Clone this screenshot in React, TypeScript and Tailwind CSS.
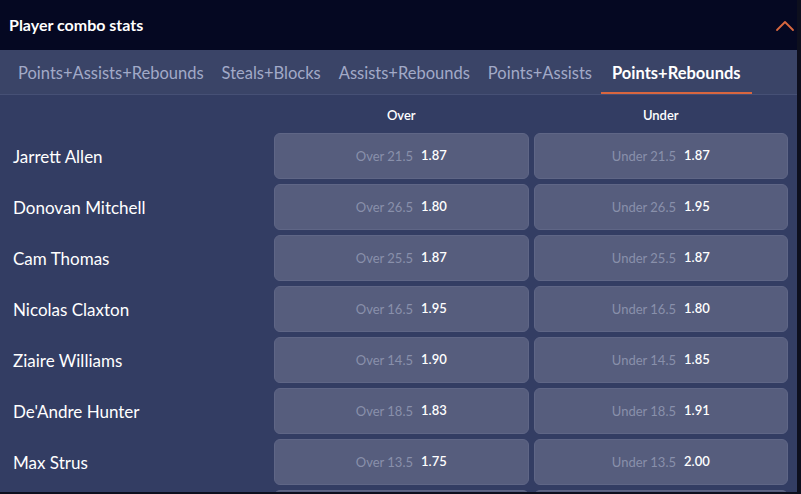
const tabs = [
  "Points+Assists+Rebounds",
  "Steals+Blocks",
  "Assists+Rebounds",
  "Points+Assists",
  "Points+Rebounds",
];

const rows = [
  { name: "Jarrett Allen", line: "21.5", over: "1.87", under: "1.87" },
  { name: "Donovan Mitchell", line: "26.5", over: "1.80", under: "1.95" },
  { name: "Cam Thomas", line: "25.5", over: "1.87", under: "1.87" },
  { name: "Nicolas Claxton", line: "16.5", over: "1.95", under: "1.80" },
  { name: "Ziaire Williams", line: "14.5", over: "1.90", under: "1.85" },
  { name: "De'Andre Hunter", line: "18.5", over: "1.83", under: "1.91" },
  { name: "Max Strus", line: "13.5", over: "1.75", under: "2.00" },
];

function OddsButton({ label, odds }: { label?: string; odds?: string }) {
  return (
    <button className="flex-1 h-[46px] rounded-[6px] bg-[#565d7d] border border-[#5f6686] flex items-center justify-center gap-[8px]">
      {label && <span className="text-[13px] text-[#8990ab] pt-[2px]">{label}</span>}
      {odds && <span className="text-[13px] font-semibold text-white">{odds}</span>}
    </button>
  );
}

export default function App() {
  const active = "Points+Rebounds";
  return (
    <div
      className="w-[801px] h-[494px] overflow-hidden bg-[#0d0f1e]"
      style={{ fontFamily: "Lato, 'Noto Sans', sans-serif" }}
    >
      <div className="w-[797px] h-[492px] overflow-hidden flex flex-col bg-[#333d63]">
        <header className="shrink-0 h-[50px] bg-[#050822] flex items-center justify-between pl-[9px] pr-[2px]">
          <h1 className="text-[16px] font-bold text-white">Player combo stats</h1>
          <svg width="20" height="12" viewBox="0 0 20 12" fill="none" className="mt-[1px]">
            <path d="M2 10 L10 2 L18 10" stroke="#d9683f" strokeWidth="1.8" strokeLinecap="round" strokeLinejoin="round" />
          </svg>
        </header>

        <nav className="shrink-0 h-[45px] bg-[#3a4467] border-b border-[#465075] flex items-stretch px-[9px]">
          {tabs.map((t) => {
            const isActive = t === active;
            return (
              <div
                key={t}
                className={
                  isActive
                    ? "px-[11px] flex items-center text-[16.5px] font-bold text-white border-b-2 border-[#d9663f] pt-[5px]"
                    : "px-[9px] flex items-center text-[16.5px] text-[#a2aac8] border-b-2 border-transparent pt-[5px]"
                }
              >
                {t}
              </div>
            );
          })}
        </nav>

        <div className="shrink-0 flex pr-[9px] h-[38px] items-center pt-[3px]">
          <div className="w-[274px]" />
          <div className="flex-1 text-center text-[13px] font-semibold text-white">Over</div>
          <div className="w-[5px]" />
          <div className="flex-1 text-center text-[13px] font-semibold text-white">Under</div>
        </div>

        <div className="shrink-0 flex flex-col gap-[5px]">
          {rows.map((r) => (
            <div key={r.name} className="flex items-center pr-[9px]">
              <div className="w-[274px] pl-[13px] text-[17px] text-white pt-[2px]">{r.name}</div>
              <div className="flex-1 flex gap-[5px]">
                <OddsButton label={`Over ${r.line}`} odds={r.over} />
                <OddsButton label={`Under ${r.line}`} odds={r.under} />
              </div>
            </div>
          ))}
          <div className="flex items-center pr-[9px]">
            <div className="w-[274px]" />
            <div className="flex-1 flex gap-[5px]">
              <OddsButton />
              <OddsButton />
            </div>
          </div>
        </div>
      </div>
    </div>
  );
}
